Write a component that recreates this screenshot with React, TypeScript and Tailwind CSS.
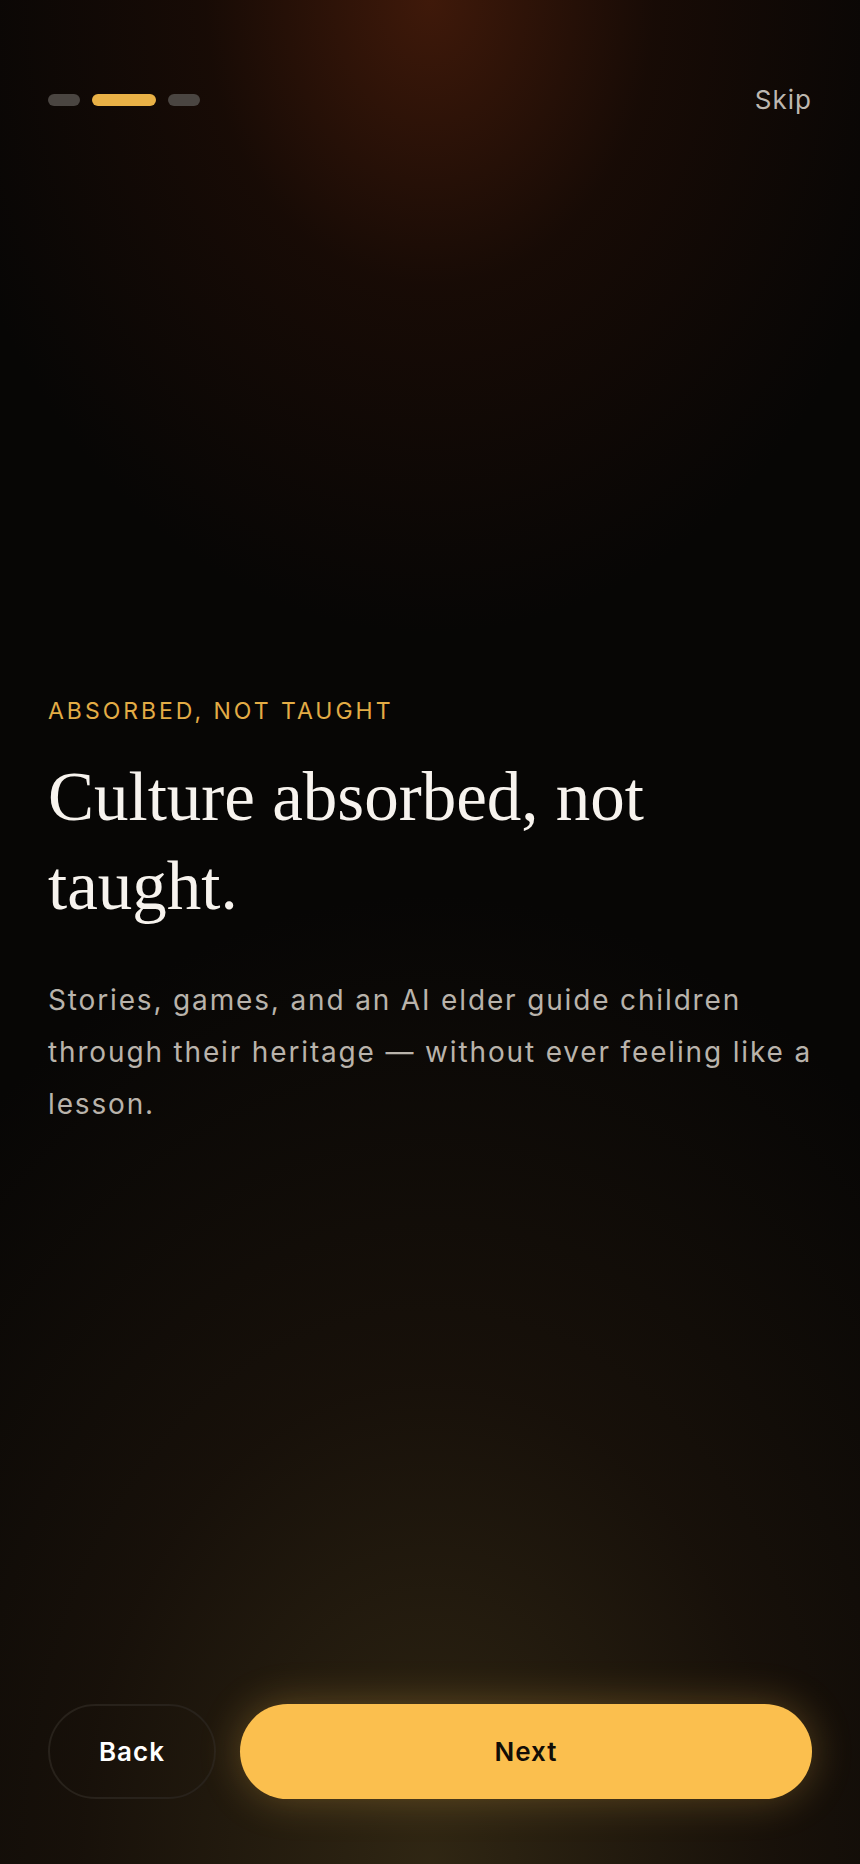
import { useState } from 'react';

const steps = [0, 1, 2];

export default function App() {
  const [step, setStep] = useState(1);

  return (
    <div className="relative min-h-[1864px] w-full overflow-hidden bg-[#070605] font-['Inter','Noto_Sans',sans-serif]">
      <div className="pointer-events-none absolute inset-0 bg-[image:radial-gradient(ellipse_58%_34%_at_50%_0%,rgba(66,26,10,0.95),rgba(40,16,6,0.5)_45%,transparent_100%)]" />
      <div className="pointer-events-none absolute inset-0 bg-[image:radial-gradient(ellipse_82%_52%_at_50%_100%,rgba(50,40,20,0.95),rgba(32,22,12,0.65)_50%,transparent_100%)]" />

      <div className="relative flex min-h-[1864px] flex-col px-[48px]">
        {/* top bar */}
        <div className="mt-[84px] flex h-[32px] items-center justify-between">
          <div className="flex items-center gap-[12px]">
            {steps.map((s) => (
              <button
                key={s}
                onClick={() => setStep(s)}
                className={`h-[12px] rounded-full ${s === step ? 'w-[64px] bg-[#e9b146]' : 'w-[32px] bg-[#4a4541]'}`}
              />
            ))}
          </div>
          <button className="text-[26px] leading-[32px] tracking-[0.04em] text-[#bdb7b0]">Skip</button>
        </div>

        {/* content */}
        <div className="mt-[579px]">
          <p className="text-[23px] leading-[32px] tracking-[0.13em] text-[#e3ac45]">
            ABSORBED, NOT TAUGHT
          </p>
          <h1 className="mt-[26px] font-['Liberation_Serif','Times_New_Roman',serif] text-[69px] leading-[89px] font-normal text-[#f7f3ee]">
            Culture absorbed, not taught.
          </h1>
          <p className="mt-[43px] whitespace-nowrap text-[28px] leading-[52px] tracking-[0.066em] text-[#b9b3ab]">
            Stories, games, and an AI elder guide children
            <br />
            through their heritage — without ever feeling like a
            <br />
            lesson.
          </p>
        </div>

        <div className="flex-1" />

        {/* actions */}
        <div className="flex gap-[24px] pb-[65px]">
          <button
            onClick={() => setStep(Math.max(0, step - 1))}
            className="h-[95px] w-[168px] rounded-full border-2 border-[#28221b] text-[26px] font-semibold tracking-[0.04em] text-white"
          >
            Back
          </button>
          <button
            onClick={() => setStep(Math.min(2, step + 1))}
            className="h-[95px] flex-1 rounded-full bg-[#fbbf4e] text-[26px] font-semibold tracking-[0.04em] text-[#120d06] shadow-[0_0_40px_rgba(251,191,78,0.28)]"
          >
            Next
          </button>
        </div>
      </div>
    </div>
  );
}
